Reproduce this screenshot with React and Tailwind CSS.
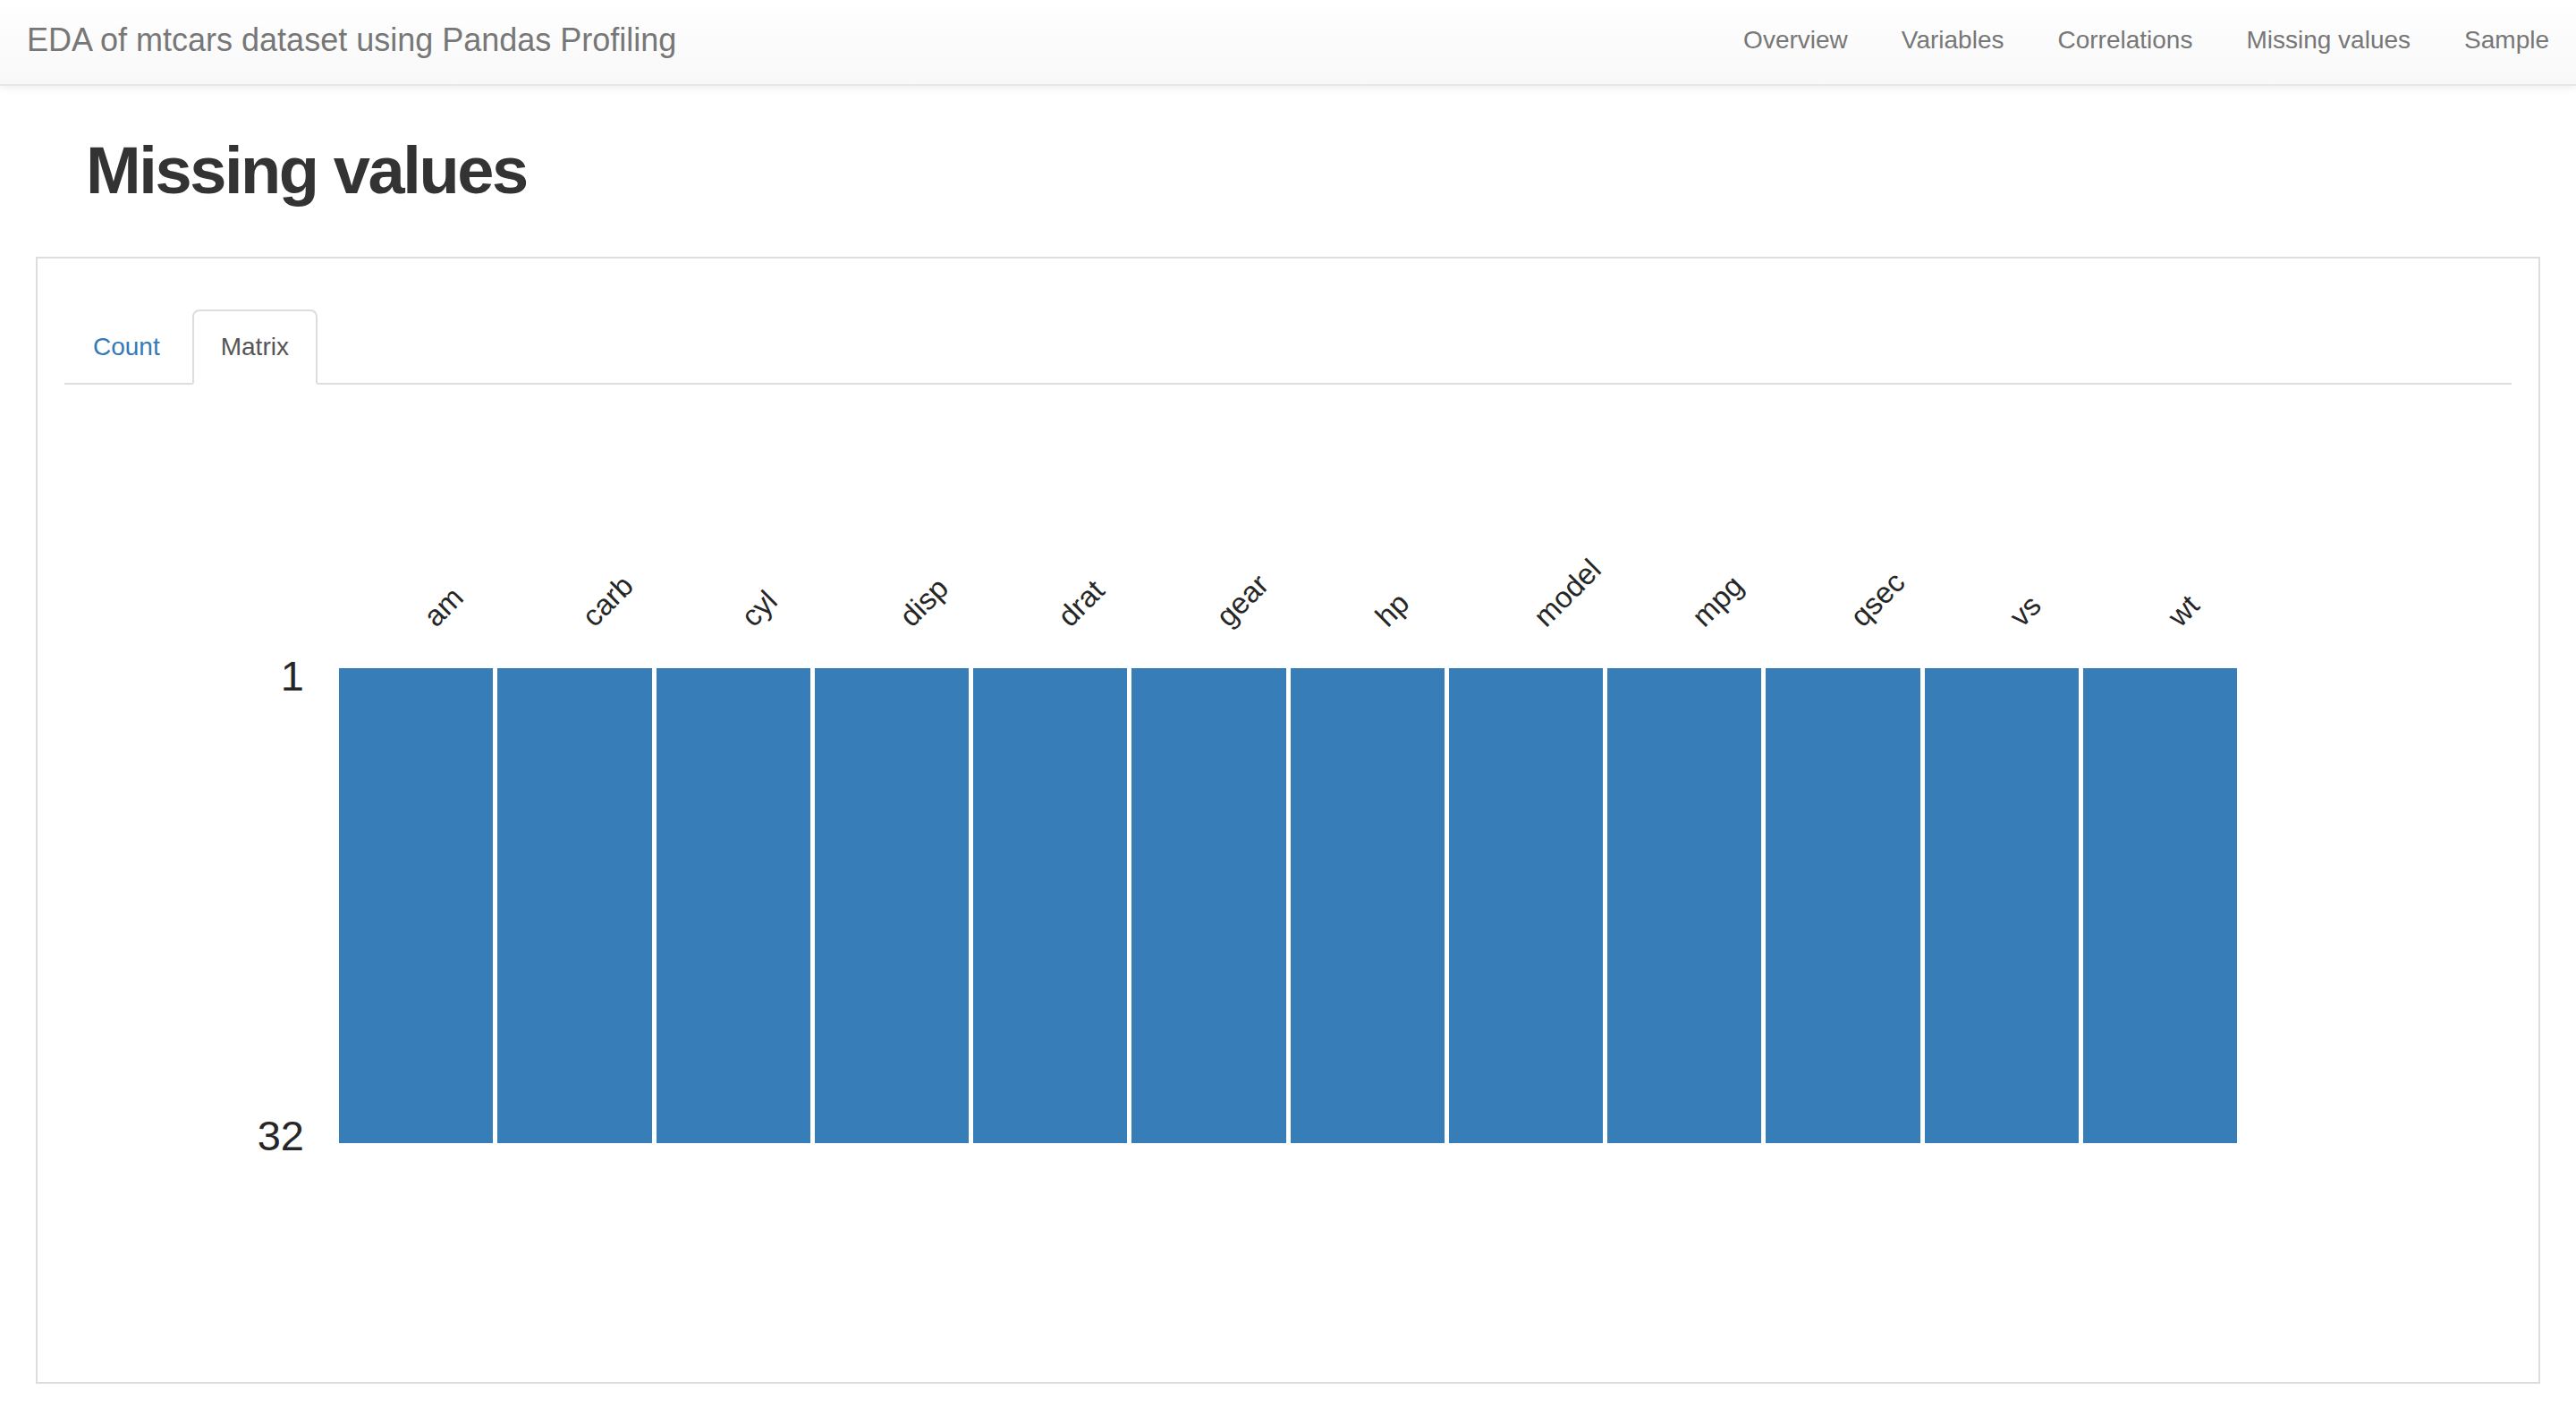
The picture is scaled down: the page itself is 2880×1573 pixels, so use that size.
import React from 'react';

const navLinks = ['Overview', 'Variables', 'Correlations', 'Missing values', 'Sample'];
const columns = ['am', 'carb', 'cyl', 'disp', 'drat', 'gear', 'hp', 'model', 'mpg', 'qsec', 'vs', 'wt'];

const Navbar = () => (
  <nav className="h-[96px] border-b-2 border-[#e7e7e7] bg-gradient-to-b from-white to-[#f8f8f8] shadow-[0_2px_10px_rgba(0,0,0,0.075)] flex items-center justify-between pb-[4px]">
    <a className="pl-[30px] text-[36px] text-[#777] whitespace-nowrap">EDA of mtcars dataset using Pandas Profiling</a>
    <ul className="flex">
      {navLinks.map((l) => (
        <li key={l} className="px-[30px] text-[28px] leading-[40px] text-[#777] whitespace-nowrap">
          {l}
        </li>
      ))}
    </ul>
  </nav>
);

const Tabs = () => (
  <ul className="flex border-b-2 border-[#ddd]">
    <li className="-mb-[2px] mr-[4px]">
      <a className="block px-[30px] py-[20px] border-2 border-transparent rounded-t-[8px] text-[28px] leading-[40px] text-[#337ab7]">
        Count
      </a>
    </li>
    <li className="-mb-[2px]">
      <a className="block px-[30px] py-[20px] border-2 border-[#ddd] border-b-white bg-white rounded-t-[8px] text-[28px] leading-[40px] text-[#555]">
        Matrix
      </a>
    </li>
  </ul>
);

// missingno-style nullity matrix: every column complete (32 rows)
const MatrixChart = () => (
  <div className="flex mt-[167px] text-[#262626]">
    {/* y axis */}
    <div className="w-[268px] mt-[150px] h-[531px] flex flex-col justify-between items-end">
      <div className="h-[17px] flex items-center text-[47px] leading-none">1</div>
      <div className="h-[17px] flex items-center text-[47px] leading-none">32</div>
    </div>
    <div className="ml-[39px] w-[2122px] grid grid-cols-12 gap-x-[5px]">
      {columns.map((c) => (
        <div key={c} className="flex flex-col">
          <div className="relative h-[150px]">
            <span className="absolute bottom-[41px] left-[calc(50%+26px)] origin-bottom-left -rotate-45 whitespace-nowrap text-[33px] leading-none">
              {c}
            </span>
          </div>
          <div className="h-[531px] bg-[#377eb8]" />
        </div>
      ))}
    </div>
  </div>
);

export default function App() {
  return (
    <div className="min-h-screen bg-white font-['Liberation_Sans',Arial,sans-serif]">
      <Navbar />
      <main className="px-[40px]">
        <h1 className="mt-[54px] ml-[56px] text-[74px] leading-[81px] font-bold tracking-[-2.4px] text-[#333]">Missing values</h1>
        <section className="mt-[56px] h-[1260px] border-2 border-[#ddd] px-[30px] pt-[57px]">
          <Tabs />
          <MatrixChart />
        </section>
      </main>
    </div>
  );
}
